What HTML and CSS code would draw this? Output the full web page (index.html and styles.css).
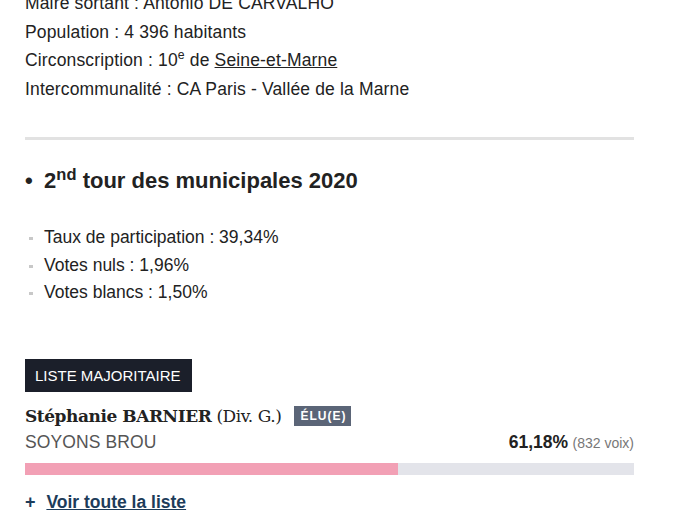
FILE: index.html
```html
<!DOCTYPE html>
<html lang="fr">
<head>
<meta charset="utf-8">
<link rel="stylesheet" href="styles.css">
</head>
<body>
<div class="page">
  <ul class="infos">
    <li>Maire sortant : Antonio DE CARVALHO</li>
    <li>Population : 4 396 habitants</li>
    <li>Circonscription : 10<sup>e</sup> de <a href="#" class="plain-link">Seine-et-Marne</a></li>
    <li>Intercommunalité : CA Paris - Vallée de la Marne</li>
  </ul>
  <hr class="sep">
  <h2 class="tour"><span class="dot">•</span> 2<sup>nd</sup> tour des municipales 2020</h2>
  <ul class="stats">
    <li>Taux de participation : 39,34%</li>
    <li>Votes nuls : 1,96%</li>
    <li>Votes blancs : 1,50%</li>
  </ul>
  <div class="label">LISTE MAJORITAIRE</div>
  <div class="cand">
    <span class="name">Stéphanie BARNIER</span> <span class="party">(Div. G.)</span>
    <span class="badge">ÉLU(E)</span>
  </div>
  <div class="row">
    <span class="liste">SOYONS BROU</span>
    <span class="score"><b>61,18%</b> <small>(832 voix)</small></span>
  </div>
  <div class="bar"><div class="fill" style="width:61.18%"></div></div>
  <a href="#" class="more"><span class="plus">+</span> <span class="more-text">Voir toute la liste</span></a>
</div>
</body>
</html>
```
FILE: styles.css
```css
html, body { margin: 0; padding: 0; background: #fff; }
body { font-family: "Liberation Sans", Arial, sans-serif; color: #222; }
.page { width: 609px; margin-left: 25px; margin-top: -11px; }
.infos { list-style: none; margin: 0; padding: 0; }
.infos li { font-size: 17.5px; letter-spacing: 0.15px; line-height: 28.5px; color: #222; }
sup { font-size: 0.7em; line-height: 0; vertical-align: 0.55em; }
.plain-link { color: #222; text-decoration: underline; }
.sep { border: 0; height: 3px; background: #e2e2e2; margin: 34px 0 0 0; }
.tour { font-size: 22px; font-weight: bold; margin: 29px 0 0 0; line-height: 24px; color: #222; }
.tour sup { font-size: 0.75em; vertical-align: 0.5em; }
.dot { display: inline-block; width: 13px; }
.stats { list-style: none; margin: 31px 0 0 0; padding: 0; }
.stats li { font-size: 17.5px; line-height: 27.5px; position: relative; padding-left: 19px; color: #222; }
.stats li::before { content: ""; position: absolute; left: 4px; top: 13px; width: 4px; height: 3px; background: #c8c8c8; }
.label { display: inline-block; background: #1b1f2a; color: #fff; font-size: 15px; line-height: 33px; padding: 0 11px 0 10px; margin-top: 52px; }
.cand { margin-top: 13px; line-height: 22px; display: flex; align-items: center; }
.name { font-family: "DejaVu Serif", Georgia, serif; font-weight: bold; font-size: 17px; color: #222; letter-spacing: -0.45px; }
.party { font-family: "DejaVu Serif", Georgia, serif; font-size: 17px; color: #222; margin-left: 5px; letter-spacing: -0.45px; }
.badge { background: #5b6577; color: #fff; font-size: 12px; font-weight: bold; letter-spacing: 1px; padding: 2px 5px 2px 6px; margin-left: 13px; line-height: 16px; }
.row { display: flex; justify-content: space-between; align-items: baseline; margin-top: 4px; line-height: 22px; }
.liste { font-size: 17.5px; letter-spacing: 0.1px; color: #555; }
.score b { font-size: 17.5px; color: #222; }
.score small { font-size: 14px; color: #777; }
.bar { height: 12px; background: #e3e4ea; margin-top: 9px; }
.fill { height: 100%; background: #f2a0b5; }
.more { display: inline-block; margin-top: 17px; color: #1d3c5a; text-decoration: none; font-size: 17.5px; font-weight: bold; }
.plus { font-size: 18px; margin-right: 6px; }
.more-text { text-decoration: underline; }
```
